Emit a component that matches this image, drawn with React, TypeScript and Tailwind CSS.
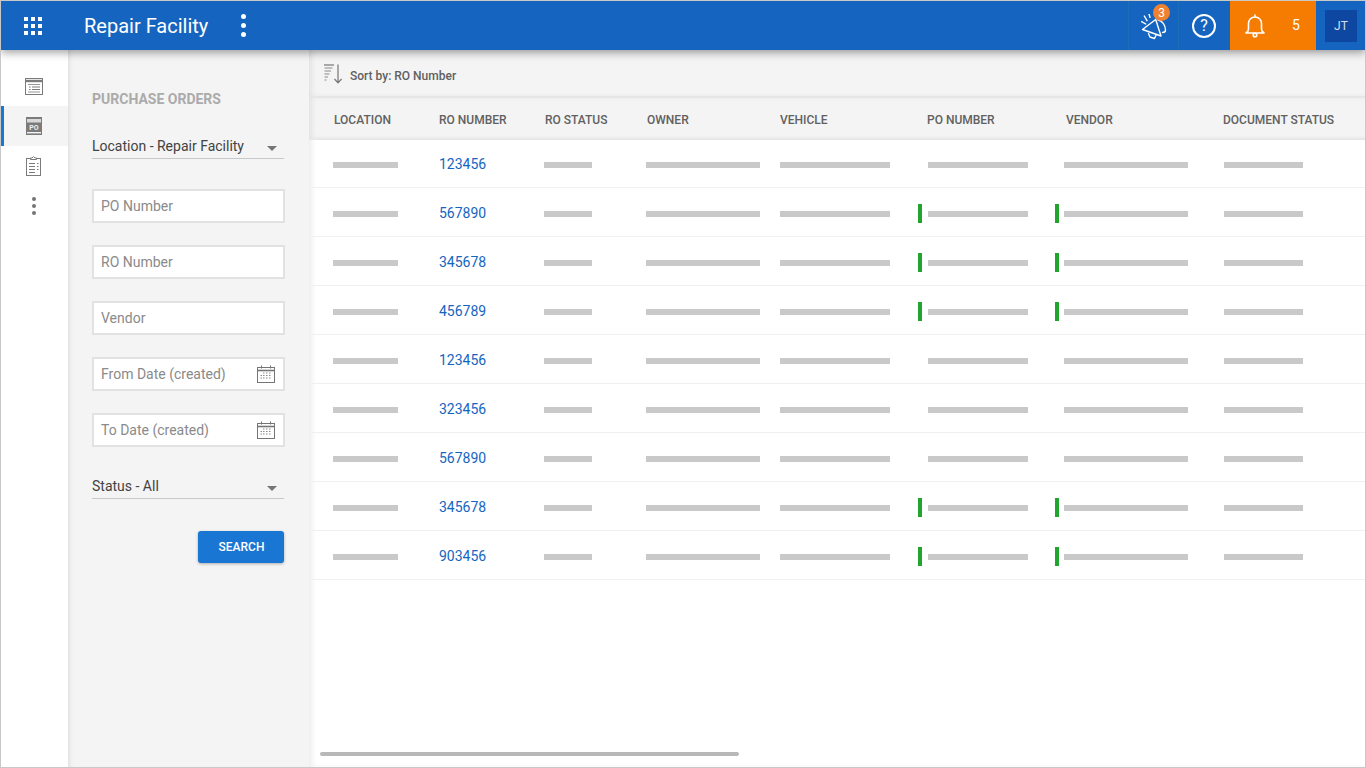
const rows = [
  { ro: "123456", flagged: false },
  { ro: "567890", flagged: true },
  { ro: "345678", flagged: true },
  { ro: "456789", flagged: true },
  { ro: "123456", flagged: false },
  { ro: "323456", flagged: false },
  { ro: "567890", flagged: false },
  { ro: "345678", flagged: true },
  { ro: "903456", flagged: true },
];

const gridCols = "grid grid-cols-[106px_105px_102px_134px_138px_137px_169px_1fr] pl-6";
const panelEdge = "shadow-[inset_4px_0_6px_-2px_rgba(0,0,0,0.09)]";

function Bar({ className }: { className: string }) {
  return <span className={`block h-[6px] bg-[#c9c9c9] ${className}`} />;
}

function Flag({ on }: { on: boolean }) {
  return <span className={`block h-[19px] w-1 shrink-0 ${on ? "bg-[#22a52e]" : ""}`} />;
}

function CalendarIcon() {
  return (
    <svg width="18" height="18" viewBox="0 0 18 18" fill="none" stroke="#757575" strokeWidth="1" className="shrink-0">
      <rect x="0.5" y="2.5" width="17" height="15" />
      <path d="M1 5.5h16" strokeWidth="1.6" />
      <path d="M4.5 0.5v3M13.5 0.5v3" />
      <path d="M6 8h1.5M9 8h1.5M12 8h1.5M3.5 10.5h1.5M6 10.5h1.5M9 10.5h1.5M12 10.5h1.5M3.5 13h1.5M6 13h1.5M9 13h1.5M12 13h1.5" strokeWidth="1.2" stroke="#8a8a8a" />
    </svg>
  );
}

function TextField({ label, calendar }: { label: string; calendar?: boolean }) {
  return (
    <div className="flex h-[34px] w-[193px] items-center justify-between border-2 border-[#e2e2e2] bg-white pl-[7px] pr-[8px] text-[14px] text-[#8a8a8a]">
      <span>{label}</span>
      {calendar && <CalendarIcon />}
    </div>
  );
}

function SelectField({ label }: { label: string }) {
  return (
    <div className="flex h-[23px] w-[192px] items-start justify-between border-b border-[#c8c8c8] text-[14px] leading-[20px] text-[#424242]">
      <span>{label}</span>
      <span className="mr-[7px] mt-[10px] h-0 w-0 border-x-[5.5px] border-t-[5px] border-x-transparent border-t-[#757575]" />
    </div>
  );
}

function Rail() {
  return (
    <nav className="flex w-[67px] shrink-0 flex-col bg-white pt-[16px]">
      <div className="flex h-10 items-center justify-center pr-px">
        <svg width="18" height="17" viewBox="0 0 18 17" fill="none" stroke="#7b7b7b">
          <rect x="0.5" y="0.5" width="17" height="16" />
          <path d="M1 3h16" strokeWidth="2.4" />
          <path d="M3 6.5h12M3 14h12" strokeWidth="0.8" />
          <path d="M4 9h1.6M4 11.5h1.6M7 9h8M7 11.5h8" strokeWidth="1.1" />
        </svg>
      </div>
      <div className="flex h-10 items-center justify-center border-l-[3px] border-[#1976d2] bg-[#f4f4f4] pr-[4px]">
        <svg width="16" height="18" viewBox="0 0 16 18" className="block">
          <rect x="0" y="0" width="16" height="18" fill="#7b7b7b" />
          <rect x="1" y="2" width="14" height="3.5" fill="#d8d8d8" />
          <rect x="1" y="15" width="14" height="1.4" fill="#f4f4f4" />
          <text x="8" y="12.6" textAnchor="middle" fontFamily="Roboto, sans-serif" fontSize="7" fontWeight="700" fill="#f0f0f0">PO</text>
        </svg>
      </div>
      <div className="flex h-10 items-center justify-center pr-px">
        <svg width="16" height="20" viewBox="0 0 16 20" fill="none" stroke="#7b7b7b">
          <rect x="0.5" y="2.5" width="14" height="17" />
          <path d="M4.5 3.5h6V2H9L7.5 0.5 6 2H4.5z" fill="#fff" />
          <path d="M3 7.5h6M11 7.5h1.5M3 10.5h6M11 10.5h1.5M3 13.5h6M11 13.5h1.5M3 16.5h6" strokeWidth="1.1" />
        </svg>
      </div>
      <div className="flex h-10 flex-col items-center justify-center gap-[3px] pr-[2px]">
        <span className="size-1 rounded-full bg-[#757575]" />
        <span className="size-1 rounded-full bg-[#757575]" />
        <span className="size-1 rounded-full bg-[#757575]" />
      </div>
    </nav>
  );
}

function Filters() {
  return (
    <aside className="flex w-[241px] shrink-0 flex-col bg-[#f4f4f4] pl-6 pt-[41px] shadow-[inset_5px_0_5px_-4px_rgba(0,0,0,0.1)]">
      <h2 className="text-[14px] font-bold leading-[16px] text-[#ababab]">PURCHASE ORDERS</h2>
      <div className="mt-[29px]"><SelectField label="Location - Repair Facility" /></div>
      <div className="mt-[30px] flex flex-col gap-[22px]">
        <TextField label="PO Number" />
        <TextField label="RO Number" />
        <TextField label="Vendor" />
        <TextField label="From Date (created)" calendar />
        <TextField label="To Date (created)" calendar />
      </div>
      <div className="mt-[29px]"><SelectField label="Status - All" /></div>
      <button className="ml-[106px] mt-[32px] h-8 w-[86px] rounded-[3px] bg-[#1976d2] pl-px text-[12px] font-medium text-white shadow-[0_1px_3px_rgba(0,0,0,0.3)]">
        SEARCH
      </button>
    </aside>
  );
}

function Table() {
  return (
    <main className={`relative z-10 flex min-w-0 flex-1 flex-col bg-white ${panelEdge}`}>
      <div className={`flex h-[48px] shrink-0 items-center gap-[8px] border-b-2 border-[#e6e6e6] bg-[#f4f4f4] pl-[15px] pt-[6px] text-[12px] font-medium text-[#616161] ${panelEdge}`}>
        <svg width="18" height="20" viewBox="0 0 18 20" fill="none" stroke="#757575" className="-mt-[4px]">
          <path d="M0 1h10" strokeWidth="1.2" />
          <path d="M0.5 4h8M0.5 7h6.5M0.5 10h5M0.5 13h3.5M0.5 16h2" strokeWidth="1.1" stroke="#8a8a8a" />
          <path d="M14 0.5v18M10.5 15l3.5 3.8 3.5-3.8" strokeWidth="1.2" />
        </svg>
        <span>Sort by: RO Number</span>
      </div>
      <div className={`${gridCols} h-[42px] shrink-0 items-center border-b-2 border-[#e8e8e8] bg-[#f4f4f4] pt-[3px] text-[12px] font-medium text-[#616161] ${panelEdge}`}>
        <span className="ml-px">LOCATION</span>
        <span>RO NUMBER</span>
        <span className="ml-px">RO STATUS</span>
        <span className="ml-px">OWNER</span>
        <span>VEHICLE</span>
        <span className="ml-[9px]">PO NUMBER</span>
        <span className="ml-[11px]">VENDOR</span>
        <span className="-ml-px">DOCUMENT STATUS</span>
      </div>
      {rows.map((row, i) => (
        <div key={i} className={`${gridCols} ${i === 0 ? "h-[48px]" : "h-[49px]"} shrink-0 items-center border-b border-[#f0f0f0] pt-[3px] text-[14px]`}>
          <Bar className="w-[65px]" />
          <a className="-mt-[1px] text-[#1565c0]">{row.ro}</a>
          <Bar className="w-12" />
          <Bar className="w-[114px]" />
          <Bar className="w-[110px]" />
          <div className="flex items-center gap-[6px]">
            <Flag on={row.flagged} />
            <Bar className="w-[100px]" />
          </div>
          <div className="flex items-center gap-[5px]">
            <Flag on={row.flagged} />
            <Bar className="w-[124px]" />
          </div>
          <Bar className="w-[79px]" />
        </div>
      ))}
      <div className="mb-[11px] ml-[11px] mt-auto h-1 w-[419px] shrink-0 rounded-full bg-[#b8b8b8]" />
    </main>
  );
}

function TopBar() {
  return (
    <header className="relative z-20 flex h-[49px] shrink-0 items-center bg-[#1565c0] text-white shadow-[0_3px_8px_rgba(0,0,0,0.35)]">
      <div className="ml-[23px] grid grid-cols-3 gap-[3px]">
        {Array.from({ length: 9 }).map((_, i) => (
          <span key={i} className="size-[4px] bg-white" />
        ))}
      </div>
      <h1 className="ml-[42px] text-[20px] leading-none">Repair Facility</h1>
      <div className="ml-[33px] flex flex-col gap-[4px]">
        <span className="size-[5px] rounded-full bg-white" />
        <span className="size-[5px] rounded-full bg-white" />
        <span className="size-[5px] rounded-full bg-white" />
      </div>
      <div className="ml-auto flex h-full items-stretch">
        <div className="relative flex w-[51px] items-center justify-center border-x border-[#1a6fb5]">
          <svg width="26" height="26" viewBox="0 0 26 26" fill="none" stroke="#fff" strokeWidth="1.4" strokeLinejoin="round" strokeLinecap="round" className="ml-[1px] mt-[3px]">
            <path d="M1.500 15.500 14.700 5.500 20 22z" />
            <path d="M7.500 19.500 9 23l4.500 1.500 1.500-3.300" />
            <path d="M17 6c4 .5 7.500 5 7.500 10 0 1.500-1.500 2.500-3 2.500" />
            <path d="M.7 7.700l4 2.300M3.300 2 6 6.700M8 0l1 3.300" />
          </svg>
          <span className="absolute left-[24px] top-[3px] flex size-[17px] items-center justify-center rounded-full bg-[#f0812e] text-[12px] leading-none">3</span>
        </div>
        <div className="flex w-[51px] items-center justify-center pr-px">
          <div className="flex size-[24px] items-center justify-center rounded-full border-2 border-white text-[16px] leading-none">?</div>
        </div>
        <div className="flex w-[86px] items-center bg-[#f57c00] pl-[15px]">
          <svg width="20" height="24" viewBox="0 0 20 24" fill="none" stroke="#fff" strokeWidth="1.6" strokeLinecap="round" strokeLinejoin="round" className="shrink-0">
            <path d="M1 19h18c-1.500-1-2.500-2-2.500-4V9.500C16.500 6 14 3 10 3S3.500 6 3.500 9.500V15c0 2-1 3-2.500 4z" />
            <path d="M10 1v2" />
            <circle cx="10" cy="21" r="1.800" />
          </svg>
          <span className="ml-[27px] text-[14px]">5</span>
        </div>
        <div className="flex w-[49px] items-center pl-[9px]">
          <div className="flex size-8 items-center justify-center bg-[#0d47a1] text-[12px] text-[#d5e0f0]">JT</div>
        </div>
      </div>
    </header>
  );
}

export default function App() {
  return (
    <div className="flex h-[768px] w-[1366px] flex-col overflow-hidden border border-[#c8c8c8] font-['Roboto',sans-serif]">
      <TopBar />
      <div className="flex min-h-0 flex-1">
        <Rail />
        <Filters />
        <Table />
      </div>
    </div>
  );
}
